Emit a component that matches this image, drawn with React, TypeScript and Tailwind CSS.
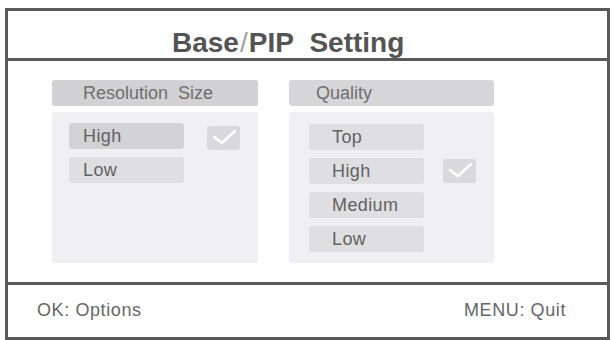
import React from "react";

const FONT = { fontFamily: '"Liberation Sans", Arial, sans-serif' };

function Check() {
  return (
    <div className="flex h-[24px] w-[33px] items-start rounded-[3px] bg-[#d9d9dc]">
      <svg width="33" height="24" viewBox="0 0 33 24" fill="none">
        <polyline
          points="7,11 15,17 28,5"
          stroke="#ffffff"
          strokeWidth="2.5"
          strokeLinecap="round"
          strokeLinejoin="round"
        />
      </svg>
    </div>
  );
}

function Item({ label, pad, dark }: { label: string; pad: string; dark?: boolean }) {
  return (
    <div
      className={`flex h-[26px] w-[115px] items-center rounded-[3px] text-[18px] tracking-[0.4px] text-[#626262] ${pad} ${
        dark ? "bg-[#d3d3d6]" : "bg-[#dfdfe2]"
      }`}
    >
      {label}
    </div>
  );
}

export default function App() {
  return (
    <div className="h-[340px] w-[612px] overflow-hidden bg-white pl-[5px] pr-[2px] pt-[8px]" style={FONT}>
      <div className="flex h-[332px] flex-col border-[3px] border-[#5a5a5a]">
        {/* title */}
        <div className="flex h-[50px] border-b-[3px] border-[#5a5a5a] pl-[164px] pt-[18px]">
          <span className="text-[28px] font-bold leading-none text-[#545454]">
            Base<span className="mx-[1px] font-normal text-[#a0a0a0]">/</span>PIP&nbsp; Setting
          </span>
        </div>

        {/* content */}
        <div className="flex h-[221px] gap-[31px] pl-[44px] pt-[19px]">
          <div className="flex w-[206px] flex-col gap-[6px]">
            <div className="flex h-[26px] items-center rounded-[3px] bg-[#d2d2d4] pl-[31px] text-[18px] text-[#6e6e6e]">
              Resolution&nbsp; Size
            </div>
            <div className="flex h-[151px] gap-[23px] rounded-[3px] bg-[#f0f0f2] pl-[17px] pt-[11px]">
              <div className="flex flex-col gap-[8px]">
                <Item label="High" pad="pl-[14px]" dark />
                <Item label="Low" pad="pl-[14px]" />
              </div>
              <div className="pt-[3px]">
                <Check />
              </div>
            </div>
          </div>

          <div className="flex w-[205px] flex-col gap-[6px]">
            <div className="flex h-[26px] items-center rounded-[3px] bg-[#d6d6d8] pl-[27px] text-[18px] text-[#6e6e6e]">
              Quality
            </div>
            <div className="flex h-[151px] gap-[19px] rounded-[3px] bg-[#f0f0f2] pl-[20px] pt-[12px]">
              <div className="flex flex-col gap-[8px]">
                <Item label="Top" pad="pl-[23px]" />
                <Item label="High" pad="pl-[23px]" />
                <Item label="Medium" pad="pl-[23px]" />
                <Item label="Low" pad="pl-[23px]" />
              </div>
              <div className="pt-[35px]">
                <Check />
              </div>
            </div>
          </div>
        </div>

        {/* footer */}
        <div className="flex flex-1 items-center justify-between border-t-[3px] border-[#5a5a5a] pl-[29px] pr-[41px] pb-[2px] text-[18px] tracking-[0.6px] text-[#666666]">
          <span>OK: Options</span>
          <span>MENU: Quit</span>
        </div>
      </div>
    </div>
  );
}
